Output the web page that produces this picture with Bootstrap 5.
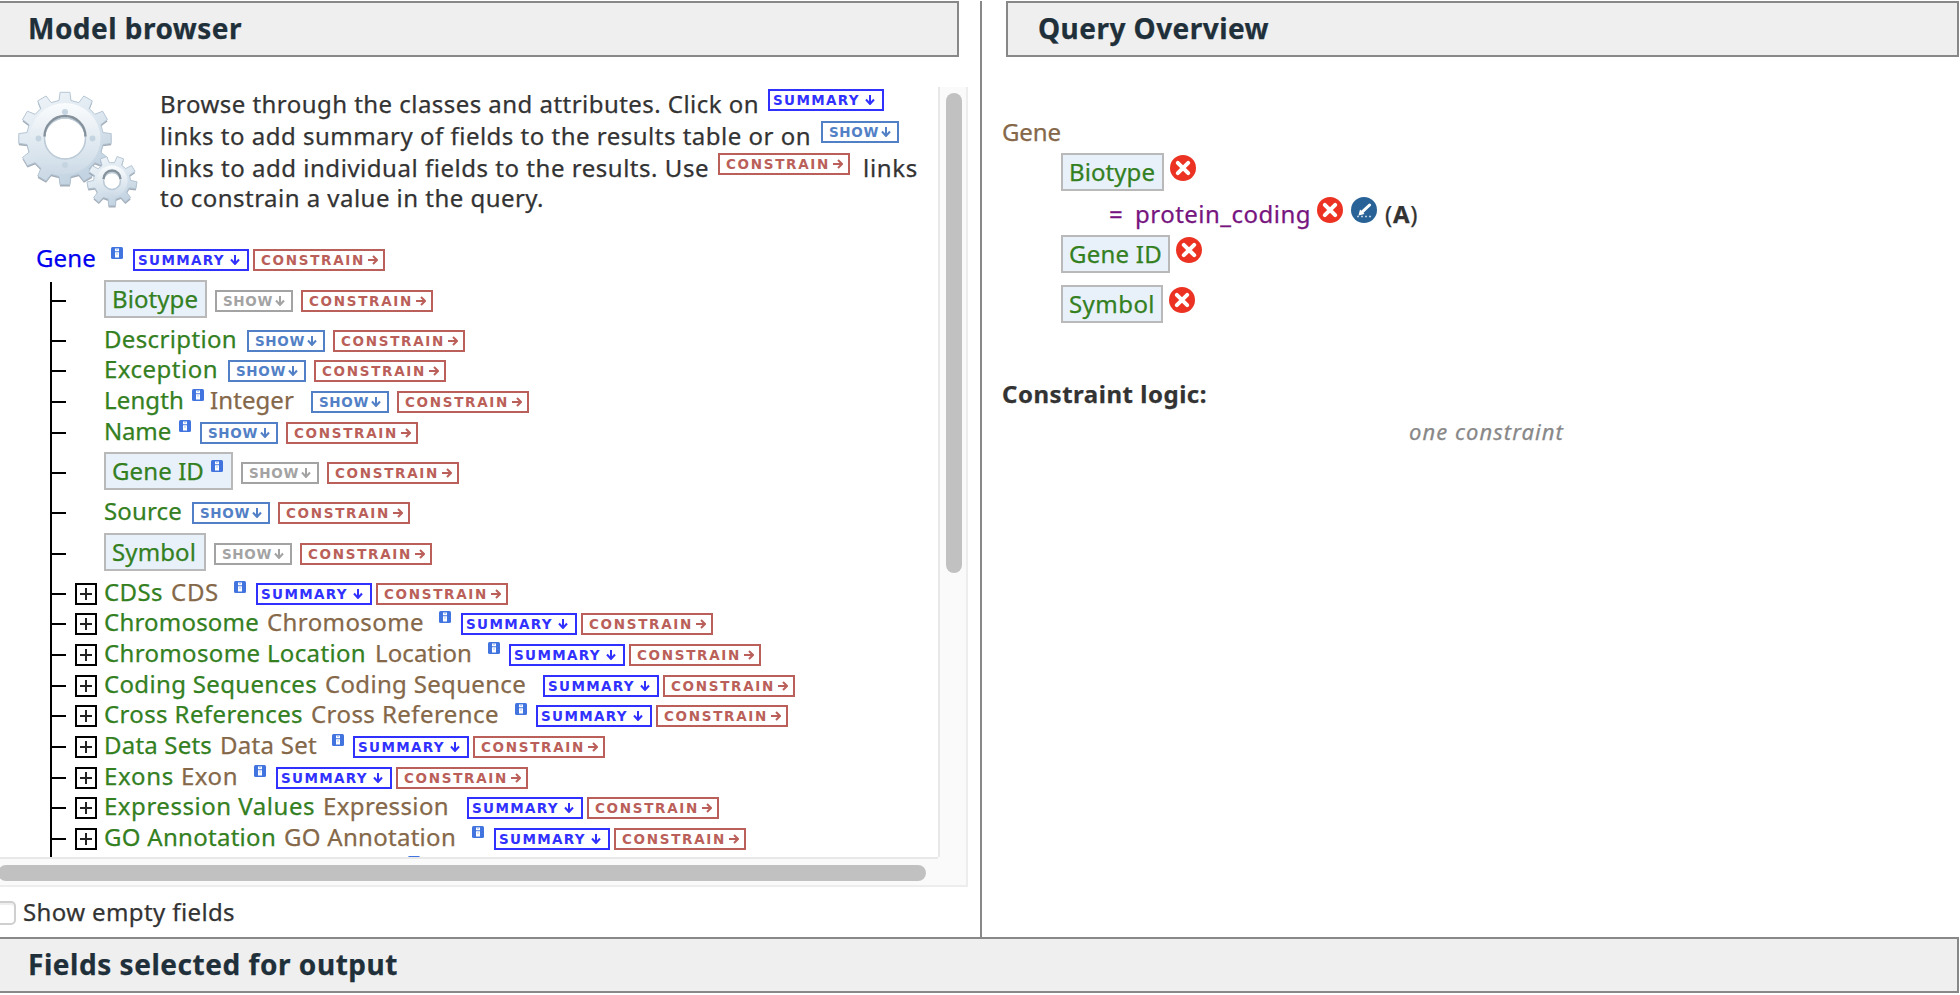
<!DOCTYPE html>
<html lang="en">
<head>
<meta charset="utf-8">
<title>Query builder</title>
<link href="https://cdn.jsdelivr.net/npm/bootstrap@5.3.0/dist/css/bootstrap.min.css" rel="stylesheet">
<style>
body{font-family:"Noto Sans",sans-serif;font-size:24px;line-height:26px;color:#333;background:#fff;width:1960px;height:995px;overflow:hidden;padding-top:1px;-webkit-text-stroke:.25px}
.fit{white-space:pre;flex:none;display:block}
.upper{height:936px}
.leftcol{width:980px;flex:none}
.rightcol{border-left:2px solid #888;width:979px;flex:none}
.bar{height:56px;background:#efefef;border:2px solid #888;color:#1f303a;font-weight:700;font-size:28px;line-height:36px;padding-top:7px}
.bar h2{font:inherit;margin:0}
.bar-left{width:959px;border-left:0;padding-left:28px}
.bar-right{width:953px;margin-left:24px;padding-left:30px}
.bar-foot{width:1959px;border-left:0;padding-left:28px}
.scroller{margin-top:30px;width:968px;height:800px;display:grid;grid-template-columns:938px 30px;grid-template-rows:770px 30px}
.view{overflow:hidden}
.track-v{background:#fafafa;border-left:2px solid #e8e8e8;border-right:2px solid #ededed;padding:6px 4px 0 6px}
.track-h{background:#fafafa;border-top:2px solid #e8e8e8;border-bottom:2px solid #ededed;padding-top:6px}
.track-c{background:#fafafa;border-right:2px solid #ededed;border-bottom:2px solid #ededed}
.thumb{background:#c1c1c1;border-radius:8px}
.track-v .thumb{width:16px;height:480px}
.track-h .thumb{height:16px;width:928px;margin-left:-2px}
.intro{height:158px}
.gears{width:160px;flex:none}
.lines{padding-top:4px}
.tagx{height:22px;border:2px solid;flex:none;display:flex;align-items:center;font:bold 13.5px/14px "DejaVu Sans",sans-serif;color:#3030ff;margin-top:4px;-webkit-text-stroke:0}
.tagx svg{flex:none}
.intro .tagx{margin-top:-2px}
.t-sum{width:116px;padding-left:3px}
.t-sum .fit{width:92px}
.t-show{width:78px;padding-left:6px;color:#5280c6}
.t-show .fit{width:52px}
.t-con{width:132px;padding-left:6px;color:#ba5f59}
.t-con .fit{width:107px}
.t-off{color:#a3a3a3}
.info{width:12px;height:12px;margin-top:2px;flex:none;display:block}
.root{height:37px;padding-left:36px}
.c-root{color:#0000ee}.c-attr{color:#34801f}.c-type{color:#856849}.c-val{color:#77157f}
.tree{list-style:none;margin:0 0 0 50px;padding:0;border-left:2px solid #000}
.tree li{display:flex}
.tree li.sel{padding-top:4px}
.tick{width:14px;height:2px;background:#000;flex:none;margin-top:14px}
.plus{width:22px;height:22px;margin:4px 0 0 9px;flex:none;display:block}
.pill{background:#e8f1fa;border:2px solid #b9b9b9;height:38px;padding:4px 0 0 6px;display:flex;flex:none}
.tree .pill{margin-top:-6px}
.query .line-r{display:flex}
.round{width:26px;height:26px;flex:none;margin-top:2px}
.checkline{margin-top:12px;height:28px;display:flex}
.checkline .form-check-input{margin:0;width:24px;height:24px;border:2px solid #cfcfcf;border-radius:5px;background:#fff;margin-left:-8px;margin-top:2px;flex:none;box-shadow:inset 0 2px 1px #eee}
.one{font-style:italic;color:#888;font-size:22px}
</style>
<script src="https://cdn.jsdelivr.net/npm/bootstrap@5.3.0/dist/js/bootstrap.bundle.min.js"></script>
</head>
<body>
<svg width="0" height="0" class="d-none">
<symbol id="down" viewBox="0 0 10 10"><path d="M5 0V9M1 4.5L5 9L9 4.5" fill="none" stroke="currentColor" stroke-width="2"/></symbol>
<symbol id="right" viewBox="0 0 10 10"><path d="M0 5H9M5 1L9 5L5 9" fill="none" stroke="currentColor" stroke-width="2"/></symbol>
<symbol id="info" viewBox="0 0 12 12"><rect width="12" height="12" rx="1.5" fill="#4274e0"/><path d="M4 1.5h4v2.8H4zM4 5.3h4v5.2H4z" fill="#fff"/><path d="M5.2 2.6h1.6M5.2 7h1.6" stroke="#9dbaf0" stroke-width="1"/></symbol>
<symbol id="plus" viewBox="0 0 22 22"><rect x="1" y="1" width="20" height="20" fill="#fff" stroke="#000" stroke-width="2"/><path d="M5 11H17M11 5V17" stroke="#222" stroke-width="2"/></symbol>
<symbol id="del" viewBox="0 0 26 26"><circle cx="13" cy="13" r="13" fill="#ec3323"/><path d="M7.8 7.8L18.2 18.2M18.2 7.8L7.8 18.2" stroke="#fff" stroke-width="4" stroke-linecap="round"/></symbol>
<symbol id="edit" viewBox="0 0 26 26"><circle cx="13" cy="13" r="13" fill="#296296"/><path d="M7.5 18.5L9 12.5L13.5 17Z" fill="#fff"/><path d="M11 15.2L18.6 8" stroke="#fff" stroke-width="3" stroke-linecap="round"/><path d="M6 19.5H21" stroke="#b9d0e4" stroke-width="1.6" stroke-dasharray="2 2"/></symbol>
</svg>

<div class="upper d-flex">
  <section class="leftcol">
    <header class="bar bar-left"><h2 class="fit" data-w="214">Model browser</h2></header>
    <div class="scroller">
      <div class="view">
        <div class="intro d-flex">
          <div class="gears">
            <svg id="gears" width="145" height="130" viewBox="0 0 145 130" class="d-block">
              <defs>
                <linearGradient id="steel" x1="0" y1="0" x2=".5" y2="1"><stop offset="0" stop-color="#f1f6fa"/><stop offset=".5" stop-color="#dfe9f1"/><stop offset="1" stop-color="#c3d3e1"/></linearGradient>
                <linearGradient id="steel2" x1="0" y1="0" x2="0" y2="1"><stop offset="0" stop-color="#fafcfd"/><stop offset="1" stop-color="#cddbe7"/></linearGradient>
              </defs>
            </svg>
          </div>
          <div class="lines">
            <div class="d-flex" style="height:32px"><span class="fit" data-w="599" style="width:608px">Browse through the classes and attributes. Click on</span><i data-tag="sum"></i></div>
            <div class="d-flex" style="height:32px"><span class="fit" data-w="651" style="width:661px">links to add summary of fields to the results table or on</span><i data-tag="show"></i></div>
            <div class="d-flex" style="height:30px"><span class="fit" data-w="549" style="width:558px">links to add individual fields to the results. Use</span><i data-tag="con"></i><span class="fit" data-w="55" style="margin-left:13px">links</span></div>
            <div class="d-flex"><span class="fit" data-w="384">to constrain a value in the query.</span></div>
          </div>
        </div>
        <div class="root d-flex">
          <span class="fit c-root" data-w="60" style="width:75px">Gene</span>
          <svg class="info"><use href="#info"/></svg>
          <span style="width:10px"></span><i data-tag="sum"></i><span style="width:4px"></span><i data-tag="con"></i>
        </div>
        <ul class="tree" id="tree"></ul>
      </div>
      <div class="track-v"><div class="thumb"></div></div>
      <div class="track-h"><div class="thumb"></div></div>
      <div class="track-c"></div>
    </div>
    <label class="checkline"><input type="checkbox" class="form-check-input"><span class="fit" data-w="212" style="margin-left:7px">Show empty fields</span></label>
  </section>

  <section class="rightcol">
    <header class="bar bar-right"><h2 class="fit" data-w="231">Query Overview</h2></header>
    <div class="query" style="padding:62px 0 0 20px">
      <div class="line-r" style="height:34px"><span class="fit c-type" data-w="59">Gene</span></div>
      <div class="line-r" style="height:48px;padding-left:59px"><span class="pill" style="width:103px"><span class="fit c-attr" data-w="86">Biotype</span></span><svg class="round" style="margin-left:6px"><use href="#del"/></svg></div>
      <div class="line-r" style="height:34px;padding-left:107px"><span class="fit c-val" data-w="17" style="width:26px">=</span><span class="fit c-val" data-w="176" style="width:182px">protein_coding</span><svg class="round" style="margin-top:-4px"><use href="#del"/></svg><svg class="round" style="margin:-4px 8px 0"><use href="#edit"/></svg><span class="fit" data-w="33">(<b>A</b>)</span></div>
      <div class="line-r" style="height:50px;padding-left:59px"><span class="pill" style="width:109px"><span class="fit c-attr" data-w="93">Gene ID</span></span><svg class="round" style="margin-left:6px"><use href="#del"/></svg></div>
      <div class="line-r" style="height:96px;padding-left:59px"><span class="pill" style="width:102px"><span class="fit c-attr" data-w="86">Symbol</span></span><svg class="round" style="margin-left:6px"><use href="#del"/></svg></div>
      <div class="line-r" style="height:37px"><b class="fit" data-w="205">Constraint logic:</b></div>
      <div class="line-r" style="padding-left:407px"><span class="fit one" data-w="155">one constraint</span></div>
    </div>
  </section>
</div>
<footer class="bar bar-foot"><h2 class="fit" data-w="370">Fields selected for output</h2></footer>

<script>
const TAGS = {
  sum: ['t-sum', 'SUMMARY', 87, 'down'],
  show: ['t-show', 'SHOW', 50, 'down'],
  off: ['t-show t-off', 'SHOW', 50, 'down'],
  con: ['t-con', 'CONSTRAIN', 104, 'right']
};
const tag = k => {
  const [c, t, w, a] = TAGS[k];
  return `<span class="tagx ${c}"><span class="fit" data-w="${w}">${t}</span><svg width="10" height="10"><use href="#${a}"/></svg></span>`;
};
const info = '<svg class="info"><use href="#info"/></svg>';
const gap = w => `<span style="width:${w}px;flex:none"></span>`;
const text = (t, c, ink, w) => `<span class="fit ${c}" data-w="${ink + 2}" style="width:${w}px">${t}</span>`;

/* attributes: row height, name, end of name, info x, type, type x, type end, first tag x, show state, selected */
const attrs = [
  [44,'Biotype',197,0,'',0,0,215,'off',207],
  [30,'Description',236,0,'',0,0,247,'show',0],
  [31,'Exception',217,0,'',0,0,228,'show',0],
  [31,'Length',183,192,'Integer',212,293,311,'show',0],
  [36,'Name',170,179,'',0,0,200,'show',0],
  [44,'Gene ID',203,211,'',0,0,241,'off',233],
  [37,'Source',181,0,'',0,0,192,'show',0],
  [44,'Symbol',195,0,'',0,0,214,'off',206]
];
/* references: row height, name, end of name, type, type x, type end, info x, summary x */
const refs = [
  [30,'CDSs',162,'CDS',172,218,234,256],
  [31,'Chromosome',258,'Chromosome',268,423,439,461],
  [31,'Chromosome Location',365,'Location',376,471,488,509],
  [30,'Coding Sequences',316,'Coding Sequence',326,525,0,543],
  [31,'Cross References',302,'Cross Reference',312,498,515,536],
  [31,'Data Sets',211,'Data Set',221,316,332,353],
  [30,'Exons',173,'Exon',182,237,254,276],
  [31,'Expression Values',314,'Expression',324,448,0,467],
  [30,'GO Annotation',275,'GO Annotation',285,455,472,494]
];
let html = '';
for (const [h,n,e,ix,t,tx,te,x,st,sel] of attrs) {
  html += `<li class="${sel ? 'sel' : ''}" style="height:${h}px"><span class="tick"></span>`;
  let at;
  if (sel) {
    html += gap(38) + `<span class="pill" style="width:${sel-104}px">` + text(n,'c-attr',e-113,(ix||e)-112) + (ix ? info : '') + '</span>';
    at = sel;
  } else {
    html += gap(38);
    const stop = ix || x;
    html += text(n,'c-attr',e-105,stop-104);
    at = stop;
    if (ix) { html += info; at = ix + 12; }
    if (t) { html += gap(tx-2-at) + text(t,'c-type',te-tx+1,te-tx+2); at = te; }
  }
  html += gap(x-at) + tag(st) + gap(8) + tag('con') + '</li>';
}
for (const [h,n,e,t,tx,te,ix,x] of refs) {
  html += `<li style="height:${h}px"><span class="tick"></span><svg class="plus"><use href="#plus"/></svg>` + gap(7)
    + text(n,'c-attr',e-105,tx-1-104) + text(t,'c-type',te-tx,te-tx+1) + (ix ? gap(ix-te) + info + gap(x-ix-12) : gap(x-te))
    + tag('sum') + gap(4) + tag('con') + '</li>';
}
html += `<li style="height:31px">${gap(356)}${info}</li>`;
document.getElementById('tree').innerHTML = html;
document.querySelectorAll('[data-tag]').forEach(e => e.outerHTML = tag(e.dataset.tag));

/* spread the letters of each label over its own width */
document.querySelectorAll('.fit[data-w]').forEach(e => {
  const r = document.createRange(); r.selectNodeContents(e);
  e.style.letterSpacing = ((e.dataset.w - r.getBoundingClientRect().width) / e.textContent.length).toFixed(3) + 'px';
});

/* cog wheels */
function cog(cx, cy, n, r0, r1, a0) {
  let p = '';
  for (let i = 0; i < n; i++) {
    const s = 2*Math.PI/n, m = a0 + i*s;
    [[-.3,r0],[-.2,r1],[.2,r1],[.3,r0]].forEach(([f,r], j) => {
      p += (i+j ? 'L' : 'M') + (cx+r*Math.cos(m+f*s)).toFixed(1) + ' ' + (cy+r*Math.sin(m+f*s)).toFixed(1);
    });
  }
  return p + 'Z';
}
const ring = (x,y,r) => `M${x-r} ${y}a${r} ${r} 0 1 0 ${2*r} 0a${r} ${r} 0 1 0 ${-2*r} 0Z`;
document.getElementById('gears').innerHTML += [[65,51.5,12,38.5,46.5,20.5,30,0],[112,94,9,18.5,25,8.5,13,.17]].map(([x,y,n,r0,r1,h,m,a]) =>
  `<path d="${cog(x,y+1.8,n,r0,r1,a)+ring(x,y,h)}" fill="#8d99a5" fill-rule="evenodd" opacity=".8"/>
   <path d="${cog(x,y,n,r0,r1,a)+ring(x,y,h)}" fill="url(#steel)" fill-rule="evenodd" stroke="#b0c1d0" stroke-width=".9"/>
   <path d="${ring(x,y,r0-3)+ring(x,y,h)}" fill="url(#steel2)" fill-rule="evenodd"/>
   <circle cx="${x}" cy="${y}" r="${h}" fill="none" stroke="#bccbd7" stroke-width="1.5"/>
   <path d="M${x-h} ${y-2}A${h} ${h} 0 0 1 ${x+h} ${y-2}" fill="none" stroke="#85919b" stroke-width="2.4"/>`).join('')
  + [[65,25],[65,78],[38.5,51.5],[92.5,51.5]].map(([x,y]) => `<circle cx="${x}" cy="${y}" r="3" fill="#c5d4e1"/>`).join('');
</script>
</body>
</html>
